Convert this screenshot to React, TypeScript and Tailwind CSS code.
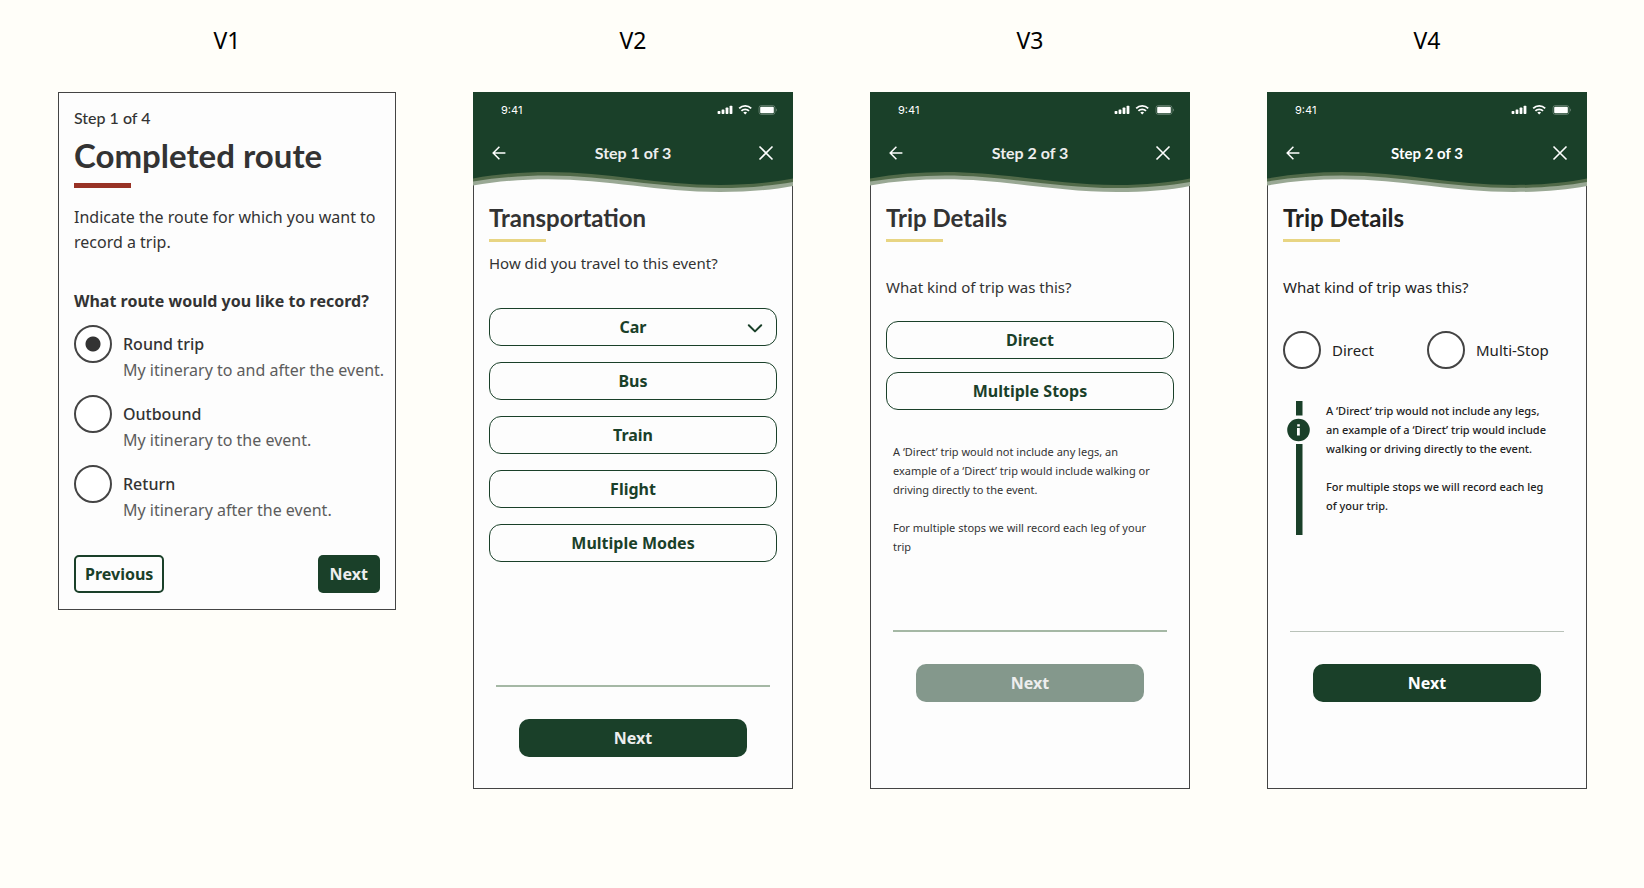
import type { ReactNode } from "react";

const RADIO =
  "m-0 size-[38px] shrink-0 appearance-none rounded-full border-2 border-[#444444] bg-white checked:bg-[radial-gradient(circle,#333333_7px,transparent_8px)]";

function Variant({ name, grow, children }: { name: string; grow: string; children: ReactNode }) {
  return (
    <section className={`flex min-w-0 flex-col ${grow}`}>
      <h2 className="mb-9 text-center text-[23px] leading-8 text-black">{name}</h2>
      {children}
    </section>
  );
}

function StatusIcons() {
  return (
    <svg className="h-3 w-[60px]" viewBox="0 0 60 12" fill="#fff" aria-hidden="true">
      <rect x="0.600" y="7" width="2.800" height="3" rx="0.700" />
      <rect x="4.600" y="5.400" width="2.800" height="4.600" rx="0.700" />
      <rect x="8.600" y="3.600" width="2.800" height="6.400" rx="0.700" />
      <rect x="12.600" y="1.800" width="2.800" height="8.200" rx="0.700" />
      <g fill="none" stroke="#fff" strokeWidth="1.800">
        <path d="M22.200 4.400a8.600 8.600 0 0 1 12 0" />
        <path d="M24.400 6.900a5.400 5.400 0 0 1 7.600 0" />
      </g>
      <path d="M26.300 8.600a2.800 2.800 0 0 1 3.800 0L28.200 10.600Z" />
      <rect x="42" y="1.500" width="16" height="9" rx="2.400" fill="none" stroke="#fff" strokeOpacity="0.350" strokeWidth="0.800" />
      <rect x="43.200" y="2.700" width="13.600" height="6.600" rx="1" />
      <path d="M59 4.500c1 .4 1 2.600 0 3Z" fillOpacity="0.400" />
    </svg>
  );
}

function Wave() {
  return (
    <svg className="block h-6 w-full" viewBox="0 0 320 24" preserveAspectRatio="none" aria-hidden="true">
      <path fill="#99a894" d="M0 0H320V16C300 20 275 22 247 22C185 22 135 9.300 75 9.300C50 9.300 25 11 0 15.500Z" />
      <path fill="#516a49" d="M0 0H320V12C300 15.500 275 18 247 18C185 18 135 5.500 75 5.500C50 5.500 25 7.500 0 11.500Z" />
      <path fill="#1a4029" d="M0 0H320V8.500C300 12.500 275 15 247 15C185 15 135 2 75 2C50 2 25 4 0 8.500Z" />
    </svg>
  );
}

function Phone({
  step,
  stepClass,
  title,
  tone,
  children,
}: {
  step: string;
  stepClass: string;
  title: string;
  tone: string;
  children: ReactNode;
}) {
  return (
    <article className={`flex min-h-[697px] flex-col border border-[#444444] bg-[#fdfdfd] ${tone}`}>
      <header className="-mx-px -mt-px">
        <div className="bg-[#1a4029] pr-4 pl-7">
          <div className="flex h-9 items-center justify-between">
            <span className="font-[Inter,sans-serif] text-[11px] leading-4 text-white">9:41</span>
            <StatusIcons />
          </div>
          <div className="-ml-[11px] flex h-[42px] items-center justify-between pt-2 pr-[3px] text-white">
            <button type="button" aria-label="Back" className="flex size-[18px] items-center justify-center">
              <svg className="size-4" viewBox="0 0 16 16" fill="none" stroke="currentColor" strokeWidth="1.500" aria-hidden="true">
                <path d="M14.400 8H2.400M8.400 1.800L2.200 8L8.400 14.200" />
              </svg>
            </button>
            <span className={`font-[Lato,sans-serif] leading-6 ${stepClass}`}>{step}</span>
            <button type="button" aria-label="Close" className="flex size-4 items-center justify-center">
              <svg className="size-4" viewBox="0 0 16 16" fill="none" stroke="currentColor" strokeWidth="1.600" aria-hidden="true">
                <path d="M1.500 1.500L14.500 14.500M14.500 1.500L1.500 14.500" />
              </svg>
            </button>
          </div>
        </div>
        <Wave />
      </header>
      <div className="flex grow flex-col px-[15px] pt-2">
        <h1 className="font-[Lato,sans-serif] text-2xl leading-8 font-bold">{title}</h1>
        <div className="mt-[5px] h-[3px] w-[57px] bg-[#e8d583]" />
        {children}
      </div>
    </article>
  );
}

function Choice({ children, icon }: { children: ReactNode; icon?: ReactNode }) {
  return (
    <button
      type="button"
      className="relative flex h-[38px] w-full items-center justify-center rounded-xl border border-[#1a4029] text-base leading-6 font-bold text-[#1a4029]"
    >
      {children}
      {icon}
    </button>
  );
}

function Footer({ line, button, disabled }: { line: string; button: string; disabled?: boolean }) {
  return (
    <footer className="mt-auto px-[7px]">
      <hr className={line} />
      <div className="mt-8 px-[23px]">
        <button
          type="button"
          disabled={disabled}
          className={`h-[38px] w-full rounded-[10px] text-base leading-6 font-bold ${button}`}
        >
          Next
        </button>
      </div>
    </footer>
  );
}

const routes = [
  { id: "round", label: "Round trip", note: "My itinerary to and after the event." },
  { id: "outbound", label: "Outbound", note: "My itinerary to the event." },
  { id: "return", label: "Return", note: "My itinerary after the event." },
];

export default function App() {
  return (
    <main className="flex min-h-screen items-start gap-[77px] bg-[#fffef9] pt-6 pr-[57px] pb-8 pl-[58px] font-['Noto_Sans',sans-serif]">
      <Variant name="V1" grow="flex-[338]">
        <article className="border border-[#444444] bg-[#fdfdfd] px-[15px] pt-3 pb-4 text-base text-[#333333]">
          <p className="font-[Lato,sans-serif] leading-[26px] font-medium">Step 1 of 4</p>
          <h1 className="font-[Lato,sans-serif] text-[33px] leading-[48px] font-bold">Completed route</h1>
          <div className="mt-1 h-[5px] w-[57px] bg-[#983225]" />
          <p className="mt-[17px] leading-[25px]">Indicate the route for which you want to record a trip.</p>
          <fieldset className="mt-[33px]">
            <legend className="leading-[26px] font-bold">What route would you like to record?</legend>
            <div className="mt-[11px] flex flex-col gap-3">
              {routes.map((route, index) => (
                <div key={route.id} className="flex gap-[11px]">
                  <input
                    type="radio"
                    name="route"
                    id={route.id}
                    defaultChecked={index === 0}
                    aria-describedby={`${route.id}-note`}
                    className={RADIO}
                  />
                  <div className="pt-[6px] leading-[26px] whitespace-nowrap">
                    <label htmlFor={route.id} className="block font-medium">
                      {route.label}
                    </label>
                    <p id={`${route.id}-note`} className="text-[#5c5c5c]">
                      {route.note}
                    </p>
                  </div>
                </div>
              ))}
            </div>
          </fieldset>
          <div className="mt-8 flex justify-between leading-6 font-bold">
            <button type="button" className="h-[38px] rounded-[5px] border-2 border-[#1a4029] px-[9px] text-[#1a4029]">
              Previous
            </button>
            <button type="button" className="h-[38px] rounded-[5px] bg-[#1a4029] px-3 text-[#eeeeee]">
              Next
            </button>
          </div>
        </article>
      </Variant>

      <Variant name="V2" grow="flex-[320]">
        <Phone step="Step 1 of 3" stepClass="text-base font-bold text-[#eeeeee]" title="Transportation" tone="pb-[31px] text-[#333333]">
          <p className="mt-[11px] text-[15px] leading-5">How did you travel to this event?</p>
          <div className="mt-[35px] mb-8 flex flex-col gap-4">
            <Choice
              icon={
                <svg className="absolute top-[15px] right-[13px] h-[9px] w-4" viewBox="0 0 16 9" fill="none" stroke="currentColor" strokeWidth="2" strokeLinecap="round" strokeLinejoin="round" aria-hidden="true">
                  <path d="M1.800 1.200L8 7.400L14.200 1.200" />
                </svg>
              }
            >
              Car
            </Choice>
            <Choice>Bus</Choice>
            <Choice>Train</Choice>
            <Choice>Flight</Choice>
            <Choice>Multiple Modes</Choice>
          </div>
          <Footer line="border-t-2 border-[#a5b8a5]" button="bg-[#1a4029] text-[#eeeeee]" />
        </Phone>
      </Variant>

      <Variant name="V3" grow="flex-[320]">
        <Phone step="Step 2 of 3" stepClass="text-base font-bold text-[#eeeeee]" title="Trip Details" tone="pb-[86px] text-[#333333]">
          <p className="mt-[35px] text-[15px] leading-5">What kind of trip was this?</p>
          <div className="mt-6 flex flex-col gap-[13px]">
            <Choice>Direct</Choice>
            <Choice>Multiple Stops</Choice>
          </div>
          <div className="mt-8 mb-8 flex flex-col gap-[19px] pr-[15px] pl-[7px] text-[11px] leading-[19px]">
            <p>A ‘Direct’ trip would not include any legs, an example of a ‘Direct’ trip would include walking or driving directly to the event.</p>
            <p>For multiple stops we will record each leg of your trip</p>
          </div>
          <Footer line="border-t-2 border-[#a5b8a5]" button="bg-[#84988c] text-[#eeeeee]" disabled />
        </Phone>
      </Variant>

      <Variant name="V4" grow="flex-[320]">
        <Phone step="Step 2 of 3" stepClass="text-[15px] font-bold text-white" title="Trip Details" tone="pb-[86px] text-[#222222]">
          <fieldset className="mt-[35px] text-[15px] leading-5">
            <legend>What kind of trip was this?</legend>
            <div className="mt-[34px] grid grid-cols-2">
              <label className="flex items-center gap-[11px]">
                <input type="radio" name="kind" className={RADIO} />
                Direct
              </label>
              <label className="flex items-center gap-[11px]">
                <input type="radio" name="kind" className={RADIO} />
                Multi-Stop
              </label>
            </div>
          </fieldset>
          <div className="mt-8 mb-8 flex gap-4 pl-1">
            <svg className="h-[134px] w-[23px] shrink-0" viewBox="0 0 23 134" aria-hidden="true">
              <path fill="#1a4029" d="M9 0h6.500v14.500H9zM9 43h6.500v91H9z" />
              <circle cx="11.500" cy="29" r="11.300" fill="#1a4029" />
              <path fill="#fff" d="M10.200 23.200h2.600v2.200h-2.600zM10 27h2.800v7.600h-2.800z" />
            </svg>
            <div className="flex flex-col gap-[19px] pr-[18px] text-[11px] leading-[19px] font-medium">
              <p>A ‘Direct’ trip would not include any legs, an example of a ‘Direct’ trip would include walking or driving directly to the event.</p>
              <p>For multiple stops we will record each leg of your trip.</p>
            </div>
          </div>
          <Footer line="border-t border-[#b9c2b9]" button="bg-[#1a4029] text-white" />
        </Phone>
      </Variant>
    </main>
  );
}
